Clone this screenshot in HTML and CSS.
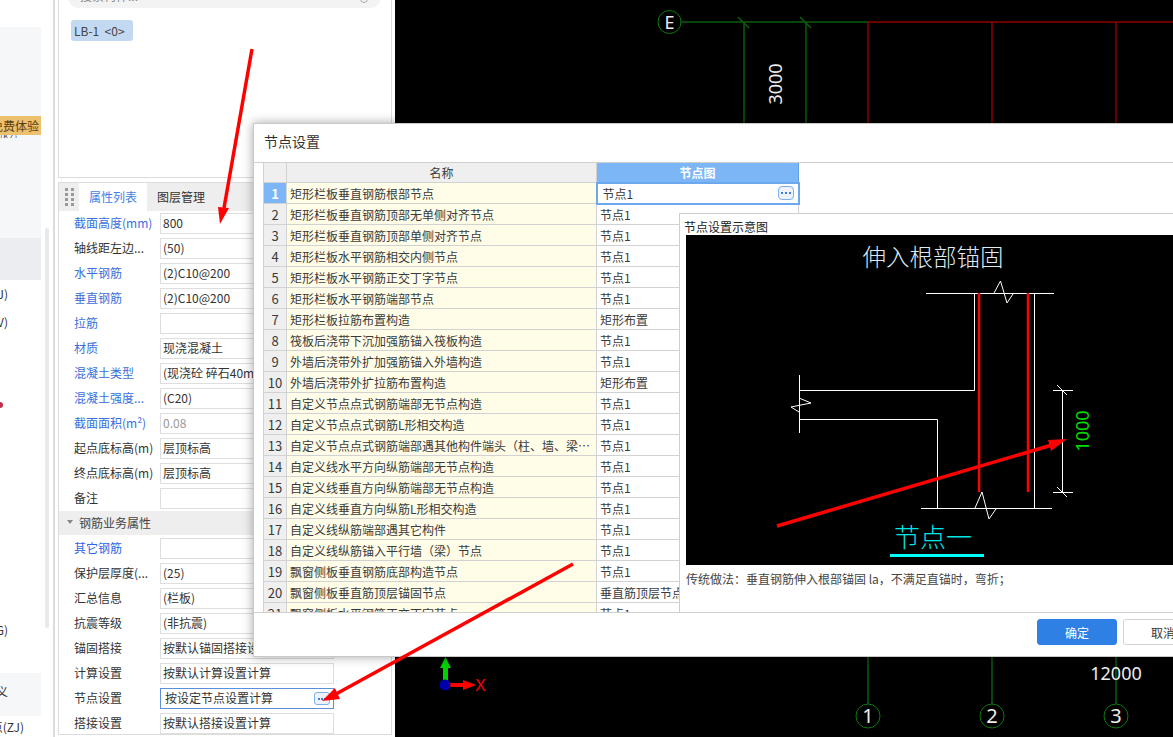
FILE: index.html
```html
<!DOCTYPE html>
<html lang="zh-CN">
<head>
<meta charset="utf-8">
<title>节点设置</title>
<link rel="stylesheet" href="styles.css">
</head>
<body>
<div class="app">
  <aside class="side">
    <div class="side-list">
      <div class="side-soft">
        <div class="side-badge"><span>免费体验</span></div>
        <div class="side-sub">(KZ)</div>
      </div>
      <div class="side-active"></div>
      <div class="side-item">板(BJ)</div>
      <div class="side-item">梁(V)</div>
      <div class="side-dot-row"><i class="side-dot"></i></div>
      <div class="side-item side-item-g">圈梁(G)</div>
      <div class="side-soft-bottom">自定义</div>
      <div class="side-item side-item-last">自定义点(ZJ)</div>
    </div>
    <div class="side-scroll"></div>
  </aside>

  <section class="mid">
    <div class="list-panel">
      <div class="search"><span>搜索构件...</span><i class="search-ico"></i></div>
      <div class="chip">LB-1 &nbsp;&lt;0&gt;</div>
    </div>
    <div class="prop-panel">
      <div class="tabs">
        <div class="handle"><i></i><i></i><i></i><i></i><i></i><i></i><i></i><i></i></div>
        <div class="tab tab-on">属性列表</div>
        <div class="tab">图层管理</div>
      </div>
      <div class="row"><span class="lab link">截面高度(mm)</span><span class="val">800</span></div>
      <div class="row"><span class="lab">轴线距左边...</span><span class="val">(50)</span></div>
      <div class="row"><span class="lab link">水平钢筋</span><span class="val">(2)C10@200</span></div>
      <div class="row"><span class="lab link">垂直钢筋</span><span class="val">(2)C10@200</span></div>
      <div class="row"><span class="lab link">拉筋</span><span class="val"></span></div>
      <div class="row"><span class="lab link">材质</span><span class="val">现浇混凝土</span></div>
      <div class="row"><span class="lab link">混凝土类型</span><span class="val">(现浇砼 碎石40mm 42.5)</span></div>
      <div class="row"><span class="lab link">混凝土强度...</span><span class="val">(C20)</span></div>
      <div class="row"><span class="lab link">截面面积(m²)</span><span class="val val-off">0.08</span></div>
      <div class="row"><span class="lab">起点底标高(m)</span><span class="val">层顶标高</span></div>
      <div class="row"><span class="lab">终点底标高(m)</span><span class="val">层顶标高</span></div>
      <div class="row"><span class="lab">备注</span><span class="val"></span></div>
      <div class="group"><i class="caret"></i>钢筋业务属性</div>
      <div class="row"><span class="lab link-strong">其它钢筋</span><span class="val"></span></div>
      <div class="row"><span class="lab">保护层厚度(...</span><span class="val">(25)</span></div>
      <div class="row"><span class="lab">汇总信息</span><span class="val">(栏板)</span></div>
      <div class="row"><span class="lab">抗震等级</span><span class="val">(非抗震)</span></div>
      <div class="row"><span class="lab">锚固搭接</span><span class="val">按默认锚固搭接设置计算</span></div>
      <div class="row"><span class="lab">计算设置</span><span class="val">按默认计算设置计算</span></div>
      <div class="row"><span class="lab">节点设置</span><span class="val val-on">按设定节点设置计算<b class="more"><i></i><i></i><i></i></b></span></div>
      <div class="row"><span class="lab">搭接设置</span><span class="val">按默认搭接设置计算</span></div>
    </div>
  </section>

  <main class="cad">
    <svg class="cad-svg" viewBox="395 0 778 737" width="778" height="737">
      <path class="ln-g" d="M681 22H868M744 22V130M806 22V130M868 657V704M992 657V704M1116 657V704"/>
      <path class="ln-g" d="M738 17L749 28M800 17L811 28"/>
      <path class="ln-r" d="M868 22H1173M868 22V130M992 22V130M1116 22V130"/>
      <circle class="ring" cx="669.5" cy="22" r="11.5"/>
      <text class="cad-t cad-e" x="669.5" y="28.5">E</text>
      <text class="cad-t cad-dim" transform="translate(782 84) rotate(-90)">3000</text>
      <text class="cad-t cad-dim" x="1116" y="680">12000</text>
      <circle class="ring" cx="868" cy="716" r="12"/>
      <circle class="ring" cx="992" cy="716" r="12"/>
      <circle class="ring" cx="1116" cy="716" r="12"/>
      <text class="cad-t cad-num" x="868" y="723">1</text>
      <text class="cad-t cad-num" x="992" y="723">2</text>
      <text class="cad-t cad-num" x="1116" y="723">3</text>
      <path class="axis-y" d="M443 685V668H440L445.500 657L451 668H448V685Z"/>
      <path class="axis-x" d="M445 683H463V680L476 685L463 690V687H445Z"/>
      <circle class="axis-o" cx="445" cy="685" r="5.500"/>
      <text class="axis-l" x="475.500" y="691">X</text>
    </svg>
  </main>
</div>

<div class="dialog">
  <div class="dialog-title">节点设置</div>
  <div class="grid-wrap">
    <table class="grid">
      <colgroup><col class="c-i"><col class="c-n"><col class="c-v"></colgroup>
      <thead><tr><th></th><th>名称</th><th class="th-on">节点图</th></tr></thead>
      <tbody>
        <tr><td class="idx idx-on">1</td><td class="name">矩形栏板垂直钢筋根部节点</td><td class="cell-on">节点1<b class="more more-cell"><i></i><i></i><i></i></b></td></tr>
        <tr><td class="idx">2</td><td class="name">矩形栏板垂直钢筋顶部无单侧对齐节点</td><td>节点1</td></tr>
        <tr><td class="idx">3</td><td class="name">矩形栏板垂直钢筋顶部单侧对齐节点</td><td>节点1</td></tr>
        <tr><td class="idx">4</td><td class="name">矩形栏板水平钢筋相交内侧节点</td><td>节点1</td></tr>
        <tr><td class="idx">5</td><td class="name">矩形栏板水平钢筋正交丁字节点</td><td>节点1</td></tr>
        <tr><td class="idx">6</td><td class="name">矩形栏板水平钢筋端部节点</td><td>节点1</td></tr>
        <tr><td class="idx">7</td><td class="name">矩形栏板拉筋布置构造</td><td>矩形布置</td></tr>
        <tr><td class="idx">8</td><td class="name">筏板后浇带下沉加强筋锚入筏板构造</td><td>节点1</td></tr>
        <tr><td class="idx">9</td><td class="name">外墙后浇带外扩加强筋锚入外墙构造</td><td>节点1</td></tr>
        <tr><td class="idx">10</td><td class="name">外墙后浇带外扩拉筋布置构造</td><td>矩形布置</td></tr>
        <tr><td class="idx">11</td><td class="name">自定义节点点式钢筋端部无节点构造</td><td>节点1</td></tr>
        <tr><td class="idx">12</td><td class="name">自定义节点点式钢筋L形相交构造</td><td>节点1</td></tr>
        <tr><td class="idx">13</td><td class="name">自定义节点点式钢筋端部遇其他构件端头（柱、墙、梁）节点</td><td>节点1</td></tr>
        <tr><td class="idx">14</td><td class="name">自定义线水平方向纵筋端部无节点构造</td><td>节点1</td></tr>
        <tr><td class="idx">15</td><td class="name">自定义线垂直方向纵筋端部无节点构造</td><td>节点1</td></tr>
        <tr><td class="idx">16</td><td class="name">自定义线垂直方向纵筋L形相交构造</td><td>节点1</td></tr>
        <tr><td class="idx">17</td><td class="name">自定义线纵筋端部遇其它构件</td><td>节点1</td></tr>
        <tr><td class="idx">18</td><td class="name">自定义线纵筋锚入平行墙（梁）节点</td><td>节点1</td></tr>
        <tr><td class="idx">19</td><td class="name">飘窗侧板垂直钢筋底部构造节点</td><td>节点1</td></tr>
        <tr><td class="idx">20</td><td class="name">飘窗侧板垂直筋顶层锚固节点</td><td>垂直筋顶层节点</td></tr>
        <tr><td class="idx">21</td><td class="name">飘窗侧板水平钢筋正交丁字节点</td><td>节点1</td></tr>
      </tbody>
    </table>
    <div class="preview">
      <div class="preview-title">节点设置示意图</div>
      <svg class="preview-svg" viewBox="686 235 487 330" width="487" height="330">
        <text class="pv-title" x="933" y="266">伸入根部锚固</text>
        <path class="pv-w" d="M926 293.500H1054M974.500 293.500V390.500H799.500M799.500 375V433M799.500 419.500H937.500V508.500M1034.500 293.500V508.500M921 508.500H1052"/>
        <path class="pv-w" d="M994 293L1000.500 281L1007 303L1013 294M799 398L811 403L791 407L799 412M975 508L982 492L989 519L996 509"/>
        <path class="pv-w" d="M1062.500 390V492M1053 390.500H1073M1057 385L1067 395M1053 492.500H1073M1057 487L1067 497"/>
        <path class="pv-r" d="M979 293V492M1028 293V492"/>
        <text class="pv-dim" transform="translate(1089 431) rotate(-90)">1000</text>
        <text class="pv-node" x="933" y="547">节点一</text>
        <rect class="pv-under" x="890" y="554" width="94" height="3"/>
      </svg>
      <div class="preview-note">传统做法：垂直钢筋伸入根部锚固 la，不满足直锚时，弯折；</div>
    </div>
  </div>
  <div class="dialog-foot">
    <button class="btn btn-primary">确定</button>
    <button class="btn">取消</button>
  </div>
</div>

<svg class="notes" viewBox="0 0 1173 737" width="1173" height="737">
  <path class="note-l" d="M252 49L224 208"/>
  <path class="note-h" d="M218 207L229 208L220 224Z"/>
  <path class="note-l" d="M573 564L336 694"/>
  <path class="note-h" d="M335 688L340 699L322 701Z"/>
  <path class="note-l" d="M777 526L1052 445"/>
  <path class="note-h" d="M1048 440L1067 439L1051 451Z"/>
</svg>
</body>
</html>
```
FILE: styles.css
```css
* { box-sizing: border-box; }
html, body { margin: 0; height: 100%; overflow: hidden; background: #fff; }
body {
  position: relative;
  font-family: "Noto Sans CJK SC", "Noto Sans", "Liberation Sans", sans-serif;
  font-size: 12px;
  color: #333;
}
i, b { display: block; font-style: normal; }

.app { display: flex; width: 1173px; height: 737px; }

/* left strip */
.side {
  flex: 0 0 55px;
  display: flex;
  gap: 4px;
  border-right: 2px solid #dcdcdc;
  height: 737px;
  overflow: hidden;
}
.side-list { flex: 0 0 41px; width: 41px; padding-top: 27px; overflow: hidden; }
.side-soft { height: 211px; background: #f6f7f9; padding-top: 89px; overflow: hidden; }
.side-badge {
  height: 19px;
  background: #ecc06d;
  display: flex;
  justify-content: flex-end;
  align-items: center;
  padding-right: 2px;
  color: #5e3f10;
  white-space: nowrap;
  overflow: hidden;
  font-size: 12px;
}
.side-sub { height: 3px; line-height: 3px; font-size: 9px; text-align: left; color: #555; overflow: hidden; }
.side-active { height: 42px; background: #ecedf0; }
.side-item {
  height: 28px;
  line-height: 28px;
  white-space: nowrap;
  display: flex;
  justify-content: flex-end;
  overflow: hidden;
  width: 8px;
}
.side-dot-row { height: 28px; margin-top: 55px; display: flex; align-items: center; }
.side-dot { width: 3px; height: 6px; border-radius: 0 3px 3px 0; background: #c0304a; }
.side-item-g { margin-top: 197px; }
.side-soft-bottom {
  height: 43px;
  margin-top: 29px;
  background: #f6f7f9;
  line-height: 38px;
  display: flex;
  justify-content: flex-end;
  white-space: nowrap;
  overflow: hidden;
  padding-right: 33px;
}
.side-item-last { width: 24px; height: 22px; line-height: 22px; }
.side-scroll {
  flex: 0 0 4px;
  margin-top: 228px;
  height: 400px;
  background: #e9e9e9;
  border-radius: 2px;
}

/* middle */
.mid { flex: 0 0 337px; padding-left: 3px; display: flex; flex-direction: column; }
.list-panel {
  height: 178px;
  width: 334px;
  border: 1px solid #dcdcdc;
  border-top: 0;
  overflow: hidden;
  padding: 0 9px;
}
.search {
  display: flex;
  justify-content: space-between;
  height: 22px;
  margin-top: -14px;
  width: 313px;
  background: #f3f3f3;
  border-radius: 11px;
  padding: 0 13px 0 12px;
  line-height: 20px;
  color: #888;
  overflow: hidden;
}
.search-ico { width: 8px; height: 8px; margin-top: 9px; border: 1px solid #aaa; border-radius: 50%; }
.chip {
  margin: 12px 0 0 3px;
  width: 62px;
  height: 21px;
  line-height: 21px;
  background: #c3d9f2;
  border-radius: 3px;
  padding-left: 3px;
  color: #444;
  white-space: nowrap;
  overflow: hidden;
}
.prop-panel {
  margin-top: 4px;
  width: 334px;
  height: 553px;
  border: 1px solid #dcdcdc;
  overflow: hidden;
}
.tabs { display: flex; height: 28px; background: #eee; }
.handle {
  width: 20px;
  display: grid;
  grid-template-columns: 3px 3px;
  gap: 2px 3px;
  align-content: center;
  justify-content: center;
}
.handle i { width: 3px; height: 3px; background: #999; }
.tab { padding: 0 10px; width: 68px; line-height: 28px; white-space: nowrap; text-align: center; }
.tab-on { background: #fff; color: #3f7fe6; }
.row { display: flex; height: 25px; align-items: center; padding-left: 15px; white-space: nowrap; }
.lab { flex: 0 0 86px; width: 86px; overflow: visible; margin-top: -2px; }
.link { color: #3a6fdc; }
.link-strong { color: #2a66e6; }
.val {
  position: relative;
  width: 174px;
  height: 21px;
  line-height: 17px;
  border: 1px solid #dedede;
  padding-left: 2px;
  overflow: hidden;
  white-space: nowrap;
  color: #333;
}
.val-off { color: #999; }
.val-on { border-color: #5b8fdc; padding-left: 4px; overflow: visible; }
.group {
  display: flex;
  align-items: center;
  height: 24px;
  margin-bottom: 1px;
  background: #eee;
  padding: 0 0 2px 8px;
  gap: 6px;
  color: #444;
}
.caret { width: 0; height: 0; border: 3.500px solid transparent; border-top: 4px solid #888; border-bottom: 0; }
.more {
  position: absolute;
  right: 3px;
  top: 3px;
  width: 16px;
  height: 13px;
  border: 1px solid #7fb0ee;
  border-radius: 3px;
  background: #eef3fb;
  display: flex;
  gap: 1px;
  align-items: center;
  justify-content: center;
}
.more i { width: 2px; height: 2px; background: #3d7fdc; }

/* cad */
.cad { flex: 1; margin-left: 3px; background: #000; height: 737px; overflow: hidden; }
.cad-svg { display: block; }
.ln-g { fill: none; stroke: #0b5c0b; stroke-width: 1.500; }
.ln-r { fill: none; stroke: #8e0000; stroke-width: 1.500; }
.ring { fill: none; stroke: #0d7a0d; stroke-width: 1; }
.cad-t { fill: #eee; font-family: "Noto Sans", sans-serif; text-anchor: middle; }
.cad-e { font-size: 18px; font-family: "Liberation Sans Narrow", "Noto Sans", sans-serif; }
.cad-dim { font-size: 18px; }
.cad-num { font-size: 20px; }
.axis-y { fill: #00d000; }
.axis-x { fill: #f00; }
.axis-o { fill: #0000a8; }
.axis-l { fill: #f00; font-family: "Noto Sans", sans-serif; font-size: 17px; }

/* dialog */
.dialog {
  position: absolute;
  left: 253px;
  top: 123px;
  width: 960px;
  height: 534px;
  background: #fff;
  border: 1px solid #c9c9c9;
  box-shadow: 0 0 10px rgba(0, 0, 0, .35);
  display: flex;
  flex-direction: column;
}
.dialog-title { height: 38px; padding-left: 10px; line-height: 35px; font-size: 14px; color: #333; }
.grid-wrap {
  position: relative;
  height: 451px;
  border-top: 1px solid #cfcfcf;
  border-bottom: 1px solid #cfcfcf;
  padding-left: 9px;
  overflow: hidden;
}
.grid { margin-top: -1px; border-collapse: collapse; table-layout: fixed; width: 535px; }
.c-i { width: 23px; }
.c-n { width: 310px; }
.c-v { width: 202px; }
.grid th, .grid td {
  height: 21px;
  padding: 0 3px;
  border: 1px solid #d2d2d2;
  font-weight: 400;
  line-height: 17px;
  overflow: hidden;
  white-space: nowrap;
  text-overflow: ellipsis;
  color: #3a3a3a;
}
.grid th { height: 20px; background: #efefef; text-align: center; }
.grid .th-on { background: #7db6f7; color: #fff; font-weight: 700; border-color: #5f9fe6; }
.idx { background: #efefef; text-align: center; }
.grid td.idx { padding: 0; font-size: 13px; }
.grid td.idx-on { background: #7db6f7; color: #fff; font-weight: 700; }
.grid td.name { background: #fffde8; }
.grid td.cell-on { position: relative; border: 2px solid #6ba8ee; padding-left: 5px; overflow: visible; }
.grid .more-cell { top: 2px; right: 4px; height: 14px; border-radius: 4px; gap: 2px; }
.preview {
  position: absolute;
  left: 425px;
  top: 50px;
  bottom: 0;
  width: 500px;
  background: #fff;
  border-left: 1px solid #cfcfcf;
  border-top: 1px solid #cfcfcf;
  padding-left: 6px;
}
.preview-title { height: 21px; line-height: 26px; margin-left: -2px; color: #222; }
.preview-svg { display: block; background: #000; }
.preview-note { line-height: 28px; color: #444; white-space: nowrap; }
.pv-title { fill: #dfeaf2; font-size: 23.500px; font-weight: 300; text-anchor: middle; }
.pv-w { fill: none; stroke: #fff; stroke-width: 1; }
.pv-r { fill: none; stroke: #f00; stroke-width: 2.500; }
.pv-dim { fill: #00dd00; font-family: "Noto Sans", sans-serif; font-size: 18px; text-anchor: middle; }
.pv-node { fill: #00e5e5; font-size: 26px; font-weight: 300; text-anchor: middle; }
.pv-under { fill: #0ff; }
.dialog-foot {
  flex: 1;
  display: flex;
  justify-content: flex-end;
  gap: 6px;
  padding: 6px 9px 0 0;
}
.btn {
  width: 80px;
  height: 26px;
  border: 1px solid #d4d4d4;
  border-radius: 3px;
  background: #fff;
  color: #333;
  font: inherit;
  padding: 0;
}
.btn-primary { background: #2f80e4; border-color: #2f80e4; color: #fff; }

/* red annotation arrows */
.notes { position: absolute; left: 0; top: 0; pointer-events: none; }
.note-l { fill: none; stroke: #f00; stroke-width: 3.500; }
.note-h { fill: #f00; }
```
